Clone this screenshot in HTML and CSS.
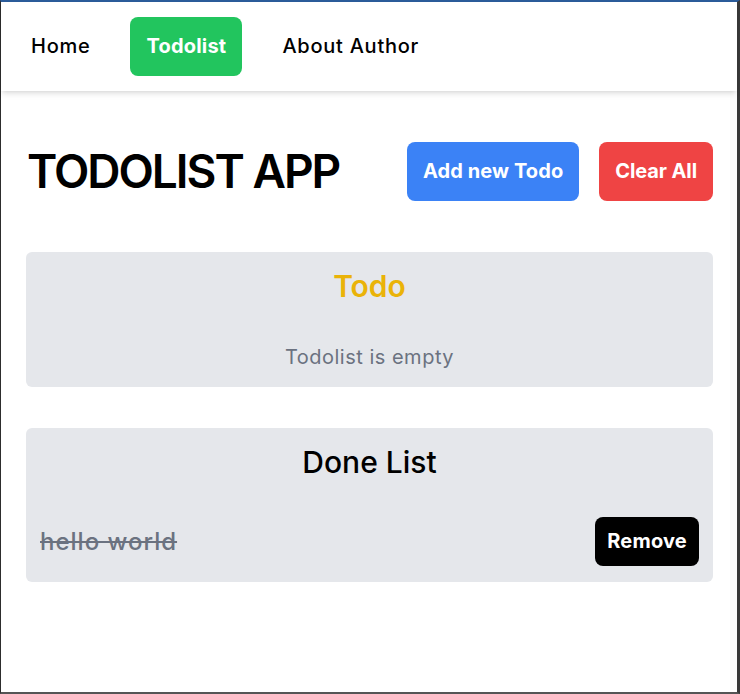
FILE: index.html
```html
<!DOCTYPE html>
<html lang="en">
<head>
<meta charset="utf-8">
<title>Todolist App</title>
<link rel="stylesheet" href="styles.css">
</head>
<body>
<div class="frame">
  <nav class="nav">
    <a class="nav-link" href="#">Home</a>
    <a class="nav-link active" href="#">Todolist</a>
    <a class="nav-link" href="#">About Author</a>
  </nav>
  <main class="main">
    <header class="header">
      <h1 class="title">TODOLIST APP</h1>
      <div class="actions">
        <button class="btn btn-blue">Add new Todo</button>
        <button class="btn btn-red">Clear All</button>
      </div>
    </header>
    <section class="card card-todo">
      <h2 class="card-title title-yellow">Todo</h2>
      <p class="empty">Todolist is empty</p>
    </section>
    <section class="card card-done">
      <h2 class="card-title">Done List</h2>
      <div class="item">
        <span class="done-text">hello world</span>
        <button class="btn btn-black">Remove</button>
      </div>
    </section>
  </main>
</div>
</body>
</html>
```

FILE: styles.css
```css
* { box-sizing: border-box; }
html { background: #2f2f2f; }
body {
  margin: 0;
  font-family: Inter, "Open Sans", sans-serif;
  color: #000;
}
.frame {
  height: 694px;
  background: #fff;
  border-top: 2px solid #2b5c9a;
  border-left: 1px solid #2d2d2d;
  border-right: 3px solid #3a3a3a;
  border-bottom: 2px solid #555;
}
.nav {
  display: flex;
  align-items: center;
  gap: 24px;
  padding: 15px 14px;
  box-shadow: 0 4px 6px -1px rgba(0,0,0,0.1), 0 2px 4px -2px rgba(0,0,0,0.1);
}
.nav-link {
  display: block;
  padding: 16px;
  font-size: 20px;
  line-height: 27px;
  font-weight: 500;
  letter-spacing: 0.75px;
  color: #000;
  text-decoration: none;
  border-radius: 8px;
}
.nav-link.active {
  background: #22c55e;
  color: #fff;
  font-weight: 700;
  letter-spacing: 0.2px;
}
.main {
  padding: 51px 24px 0 25px;
}
.header {
  display: flex;
  align-items: center;
  justify-content: space-between;
}
.title {
  margin: 0 0 0 1px;
  font-size: 46px;
  line-height: 59px;
  font-weight: 600;
  letter-spacing: -2px;
}
.actions {
  display: flex;
  gap: 20px;
}
.btn {
  border: 0;
  font-family: inherit;
  font-size: 20px;
  line-height: 27px;
  font-weight: 700;
  letter-spacing: 0.1px;
  color: #fff;
  padding: 16px;
  border-radius: 8px;
}
.btn-blue { background: #3b82f6; }
.btn-red { background: #ef4444; letter-spacing: -0.1px; }
.btn-black {
  background: #000;
  padding: 10px 12px;
  line-height: 29px;
  letter-spacing: 0.2px;
}
.card {
  background: #e5e7eb;
  border-radius: 6px;
  padding: 16px 14px 16px;
}
.card-todo { margin-top: 51px; }
.card-done { margin-top: 41px; }
.card-title {
  margin: 0;
  text-align: center;
  font-size: 30px;
  line-height: 36px;
  font-weight: 500;
}
.title-yellow { color: #eab308; font-weight: 600; }
.empty {
  margin: 39px 0 0;
  text-align: center;
  font-size: 20px;
  line-height: 28px;
  letter-spacing: 0.5px;
  color: #6b7280;
}
.item {
  margin-top: 37px;
  display: flex;
  align-items: center;
  justify-content: space-between;
}
.done-text {
  font-size: 24px;
  line-height: 32px;
  font-weight: 500;
  letter-spacing: 1px;
  color: #6b7280;
  text-decoration: line-through;
}
```
